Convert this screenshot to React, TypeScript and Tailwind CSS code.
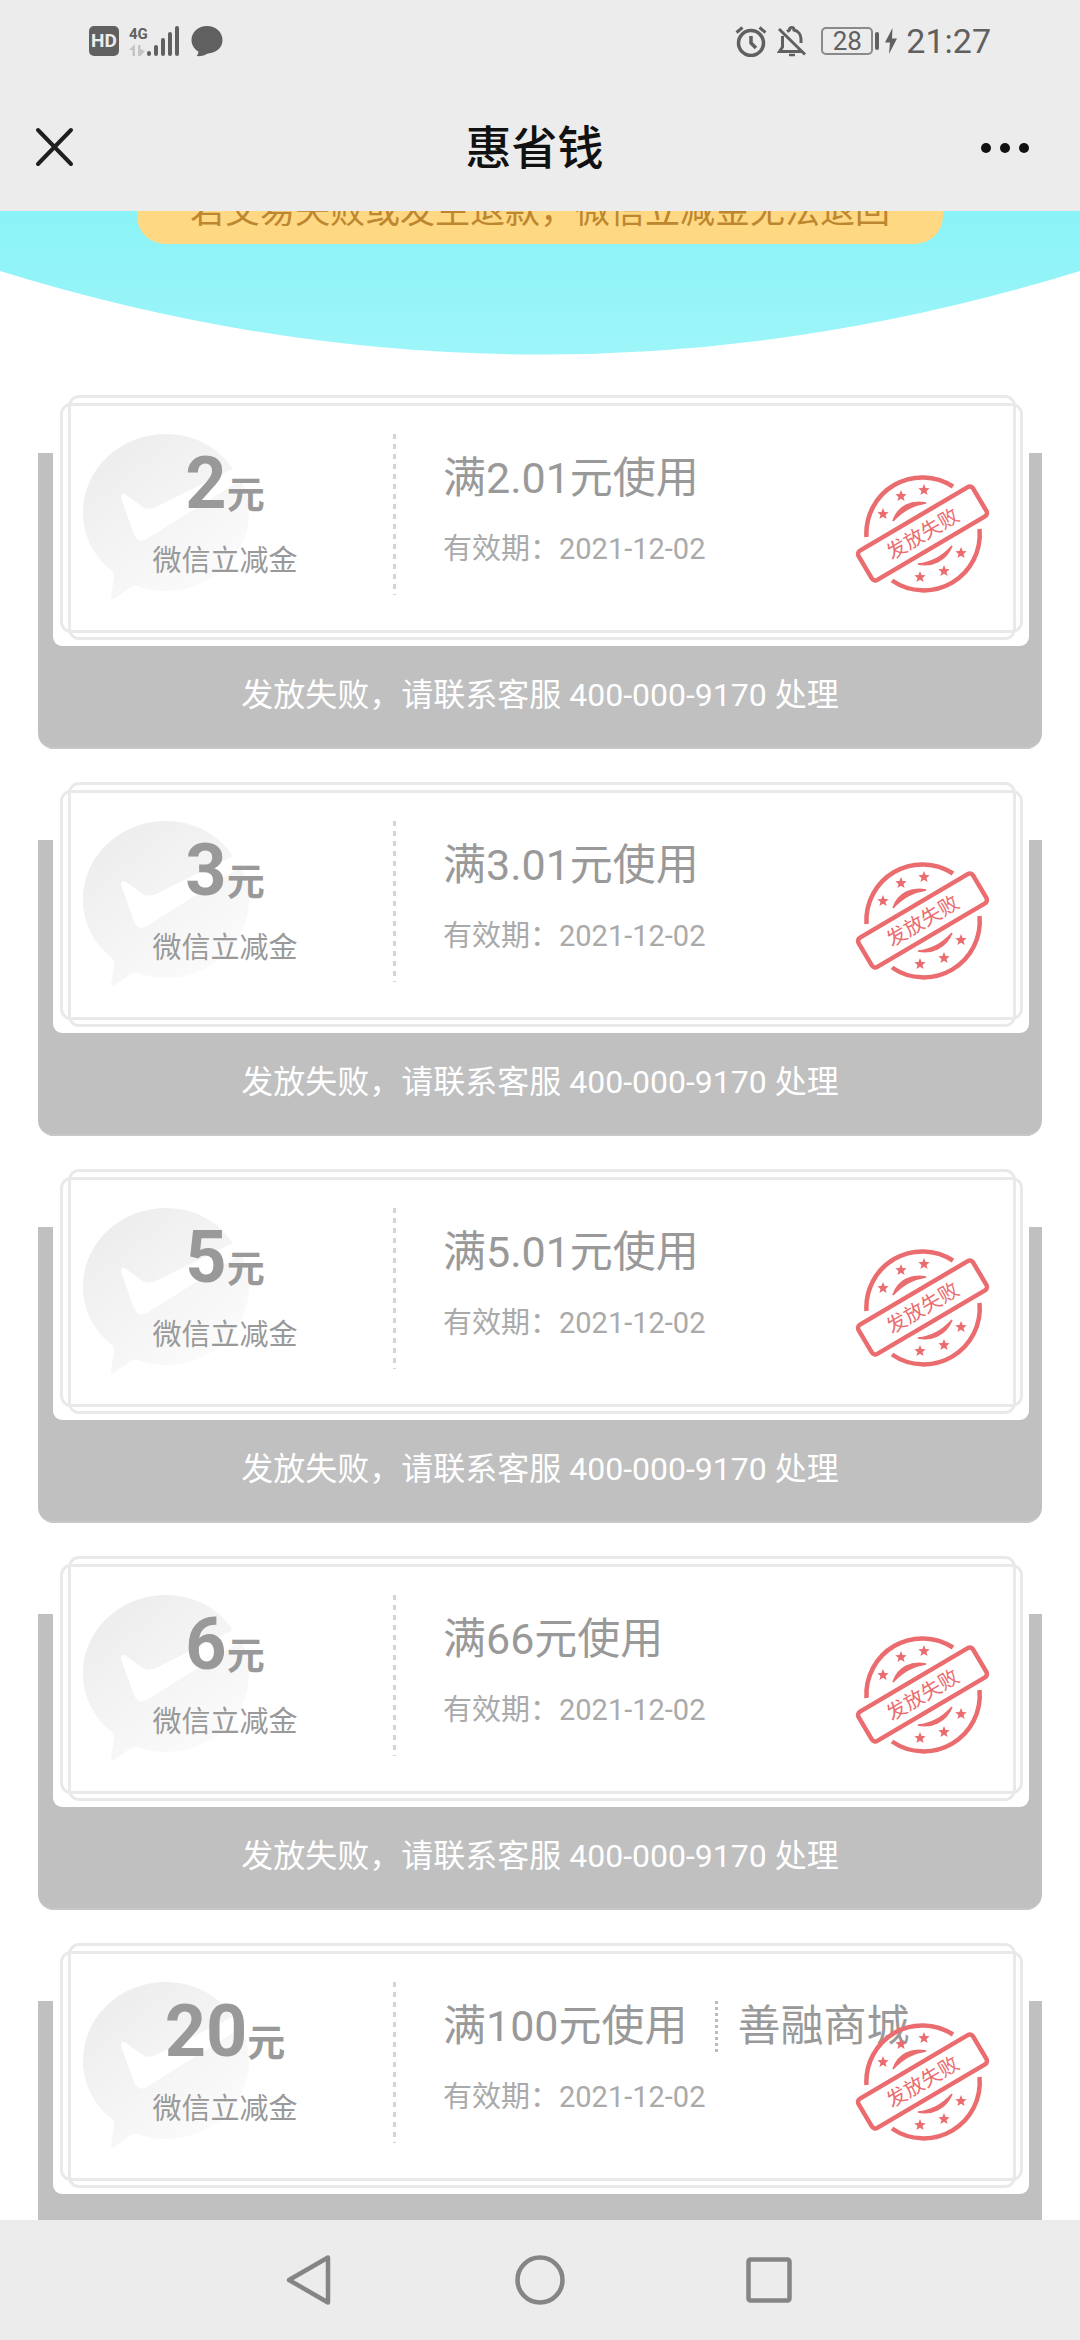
type Coupon = {
  id: number;
  amount: string;
  condition: string;
  shop?: string;
  expires: string;
};

const coupons: Coupon[] = [
  { id: 1, amount: "2", condition: "满2.01元使用", expires: "2021-12-02" },
  { id: 2, amount: "3", condition: "满3.01元使用", expires: "2021-12-02" },
  { id: 3, amount: "5", condition: "满5.01元使用", expires: "2021-12-02" },
  { id: 4, amount: "6", condition: "满66元使用", expires: "2021-12-02" },
  {
    id: 5,
    amount: "20",
    condition: "满100元使用",
    shop: "善融商城",
    expires: "2021-12-02",
  },
];

const stars = [
  [31, 42],
  [49, 24],
  [72, 18],
  [109, 81],
  [92, 99],
  [68, 105],
];

const STAR_PATH =
  "M0 -6 L1.6 -2 L5.7 -1.8 L2.5 0.9 L3.6 5 L0 2.7 L-3.6 5 L-2.5 0.9 L-5.7 -1.8 L-1.6 -2 Z";

const StatusBar = () => (
  <div className="flex h-[81px] items-center justify-between px-[89px] text-[#606060]">
    <div className="flex items-center">
      <span className="flex h-[30px] w-[30px] items-center justify-center rounded-[5px] bg-[#606060] text-[19px] font-bold leading-none text-[#ececec]">
        HD
      </span>
      <svg className="ml-[10px] h-[32px] w-[52px]" viewBox="0 0 52 32" fill="none">
        <text x="0" y="14" fontSize="15" fontWeight="700" fill="currentColor">
          4G
        </text>
        <path d="M0 25 L6 19 V31 H3.500 V25 Z" fill="#c4c4c4" />
        <path d="M9 20 H11.500 V24 L16 26 L11.500 31 H9 Z" fill="#c4c4c4" />
        <path
          d="M20 28 V29 M27 22 V29 M34 15 V29 M41 9 V29 M48 3 V29"
          stroke="currentColor"
          strokeWidth="4"
          strokeLinecap="round"
        />
      </svg>
      <svg className="ml-[10px] h-[32px] w-[32px]" viewBox="0 0 32 32">
        <path
          d="M16 1 C24.5 1 31.5 7 31.5 15 C31.5 23 25 28 17 28.5 C14 30.5 9 31.5 5.5 31 C7 29.5 7.5 28 7.3 26.5 C3 24 0.5 19.5 0.5 15 C0.5 7 7.5 1 16 1 Z"
          fill="currentColor"
        />
      </svg>
    </div>

    <div className="flex items-center">
      <svg className="h-[32px] w-[32px]" viewBox="0 0 32 32" fill="none" stroke="currentColor">
        <circle cx="16" cy="18" r="12.5" strokeWidth="3.5" />
        <path d="M16 11 V18 L21 23" strokeWidth="3.5" />
        <path d="M1.5 7.5 L7.5 2.5 M24.5 2.5 L30.5 7.5" strokeWidth="3" />
      </svg>
      <svg
        className="ml-[10px] h-[32px] w-[30px]"
        viewBox="0 0 30 32"
        fill="none"
        stroke="currentColor"
        strokeWidth="3"
      >
        <path d="M2 4 L28 29.5" />
        <path d="M5.5 11 V22 L2.5 26.5 H24" />
        <path d="M10 6.5 C11.5 5.5 12 5.5 12.5 5 C12.5 1.5 17 1.5 17 5 C21 6 24 9.5 24 14 V18" />
        <path d="M12 30 H18" strokeWidth="2.5" />
      </svg>
      <span className="ml-[14px] flex h-[28px] w-[52px] items-center justify-center rounded-[5px] border-2 border-[#8a8a8a] text-[26px] leading-none">
        28
      </span>
      <span className="ml-[2px] h-[18px] w-[4px] rounded-[2px] bg-[#606060]" />
      <svg className="ml-[6px] h-[26px] w-[12px]" viewBox="0 0 12 26">
        <path d="M7.5 0 L0 14.5 H5 L4 26 L12 10.5 H7 Z" fill="currentColor" />
      </svg>
      <span className="ml-[9px] text-[34px] leading-none">21:27</span>
    </div>
  </div>
);

const TitleBar = () => (
  <header className="flex h-[130px] items-center justify-between pl-[32px] pr-[43px] pt-[4px]">
    <button type="button" aria-label="关闭" className="flex w-[56px]">
      <svg
        className="h-[44px] w-[44px]"
        viewBox="0 0 44 44"
        stroke="#1f1f1f"
        strokeWidth="4"
        strokeLinecap="round"
      >
        <path d="M6 4 L39 38 M39 4 L6 38" />
      </svg>
    </button>
    <h1 className="text-[46px] font-medium leading-none text-[#111]">惠省钱</h1>
    <button
      type="button"
      aria-label="更多"
      className="flex w-[56px] items-center gap-[9px]"
    >
      <span className="h-[10px] w-[10px] rounded-full bg-[#111]" />
      <span className="h-[10px] w-[10px] rounded-full bg-[#111]" />
      <span className="h-[10px] w-[10px] rounded-full bg-[#111]" />
    </button>
  </header>
);

const Hero = () => (
  <section className="relative h-[144px]">
    <svg
      className="absolute inset-0 h-full w-full"
      viewBox="0 0 1080 144"
      preserveAspectRatio="none"
    >
      <defs>
        <linearGradient id="sky" x1="0" y1="0" x2="0" y2="1">
          <stop offset="0" stopColor="#8af3f7" />
          <stop offset="1" stopColor="#9df5f9" />
        </linearGradient>
      </defs>
      <path d="M0 0 H1080 V60 Q540 227 0 60 Z" fill="url(#sky)" />
    </svg>
    <div className="flex justify-center">
      <p className="relative -mt-[32px] rounded-[28px] bg-[#ffd883] px-[53px] text-[35px] leading-[65px] text-[#bd8730]">
        若交易失败或发生退款，微信立减金无法退回
      </p>
    </div>
  </section>
);

const CheckBubble = () => (
  <svg
    className="absolute left-[30px] top-[39px] h-[166px] w-[166px]"
    viewBox="0 0 166 166"
  >
    <defs>
      <linearGradient id="bubble" x1="0" y1="0" x2="0.8" y2="1">
        <stop offset="0" stopColor="#ebebeb" />
        <stop offset="1" stopColor="#fcfcfc" />
      </linearGradient>
    </defs>
    <path
      d="M83 0 C112 0 136 14 150 35 L75 72 Q65 78 57 71 L43 61 Q38 58 38 64 L51 100 Q55 110 64 105 L158 46 C163 56 166 67 166 79 C166 122 129 157 83 157 C73 157 63 155 54 152 Q51 151 48 153 L31 165 Q28 167 28 163 L31 144 Q32 140 29 137 C11 123 0 102 0 79 C0 35 37 0 83 0 Z"
      fill="url(#bubble)"
    />
  </svg>
);

const FailedStamp = () => (
  <svg
    className="absolute right-[37px] top-[77px] h-[122px] w-[140px]"
    viewBox="0 0 140 122"
    fill="none"
    stroke="#ea6c6f"
    strokeWidth="4.5"
  >
    <path d="M14.5 65 A56 56 0 0 1 101 14.5" />
    <path d="M127.5 57 A56 56 0 0 1 40 108.5" />
    <g fill="#ea6c6f" stroke="none">
      <path d="M41 49 C46 34 60 28 74 31 C62 33 52 37 41 49 Z" stroke="#ea6c6f" strokeWidth="1.5" />
      <path d="M66 92 C79 95 94 89 100 74 C90 85 79 91 66 92 Z" stroke="#ea6c6f" strokeWidth="1.5" />
      {stars.map(([x, y]) => (
        <path key={`${x}-${y}`} d={STAR_PATH} transform={`translate(${x} ${y})`} />
      ))}
    </g>
    <g transform="rotate(-30.5 70.5 61.5)">
      <rect x="4" y="44.5" width="133" height="34" rx="4" />
      <text
        x="70.5"
        y="69"
        textAnchor="middle"
        fontSize="20"
        fill="#ea6c6f"
        stroke="none"
      >
        发放失败
      </text>
    </g>
  </svg>
);

const CouponCard = ({ coupon }: { coupon: Coupon }) => (
  <article className="rounded-b-[16px] bg-[linear-gradient(to_bottom,transparent_58px,#c0c0c0_58px)]">
    <div className="relative ml-[15px] mr-[13px] flex h-[251px] rounded-b-[9px] bg-white">
      <div className="absolute bottom-[6px] left-[15px] right-[13px] top-0 rounded-[11px] border-3 border-[#e8eaea]" />
      <div className="absolute bottom-[13px] left-[7px] right-[6px] top-[8px] rounded-[11px] border-3 border-[#e8eaea]" />
      <CheckBubble />

      <div className="relative w-[340px] shrink-0 pl-[4px] pt-[53px] text-center text-[#999]">
        <p className="text-[72px] font-bold leading-[72px]">
          {coupon.amount}
          <span className="text-[38px]">元</span>
        </p>
        <p className="mt-[10px] text-[29px] leading-[40px]">微信立减金</p>
      </div>

      <div className="mt-[39px] h-[161px] w-[3px] shrink-0 bg-[repeating-linear-gradient(to_bottom,#d4d4d4_0_5px,transparent_5px_10px)]" />

      <div className="relative ml-[47px] pt-[53px]">
        <div className="flex items-center whitespace-nowrap text-[43px] leading-[60px] text-[#999]">
          <h2>{coupon.condition}</h2>
          {coupon.shop ? (
            <>
              <span className="ml-[27px] mr-[20px] h-[51px] w-[3px] bg-[repeating-linear-gradient(to_bottom,#bbb_0_3px,transparent_3px_6px)]" />
              <span>{coupon.shop}</span>
            </>
          ) : null}
        </div>
        <p className="mt-[21px] text-[29px] leading-[40px] text-[#aaa]">
          有效期：{coupon.expires}
        </p>
      </div>

      <FailedStamp />
    </div>
    <p className="rounded-b-[16px] border-b-2 border-[#c8c8c8] pb-[32px] pt-[29px] text-center text-[32px] leading-[40px] text-white">
      发放失败，请联系客服 400-000-9170 处理
    </p>
  </article>
);

const NavBar = () => (
  <nav className="flex h-[120px] shrink-0 items-center justify-center gap-[180px] bg-[#ececec]">
    <button type="button" aria-label="返回">
      <svg
        className="h-[50px] w-[50px]"
        viewBox="0 0 50 50"
        fill="none"
        stroke="#858585"
        strokeWidth="4.5"
        strokeLinejoin="round"
      >
        <path d="M43 2.5 V47.5 L4 25 Z" />
      </svg>
    </button>
    <button type="button" aria-label="主页">
      <svg className="h-[50px] w-[50px]" viewBox="0 0 50 50" fill="none">
        <circle cx="25" cy="25" r="22.5" stroke="#858585" strokeWidth="4.5" />
      </svg>
    </button>
    <button type="button" aria-label="最近任务">
      <svg className="h-[50px] w-[50px]" viewBox="0 0 50 50" fill="none">
        <rect
          x="3.5"
          y="4.5"
          width="41"
          height="41"
          rx="2"
          stroke="#858585"
          strokeWidth="4.5"
        />
      </svg>
    </button>
  </nav>
);

export default function App() {
  return (
    <div
      lang="zh-CN"
      className="flex h-screen flex-col bg-white font-[Roboto,'Noto_Sans_CJK_SC',sans-serif]"
    >
      <div className="shrink-0 bg-[#ececec]">
        <StatusBar />
        <TitleBar />
      </div>
      <main className="min-h-0 flex-1 overflow-hidden">
        <Hero />
        <div className="flex flex-col gap-[33px] px-[38px] pt-[40px]">
          {coupons.map((coupon) => (
            <CouponCard key={coupon.id} coupon={coupon} />
          ))}
        </div>
      </main>
      <NavBar />
    </div>
  );
}
